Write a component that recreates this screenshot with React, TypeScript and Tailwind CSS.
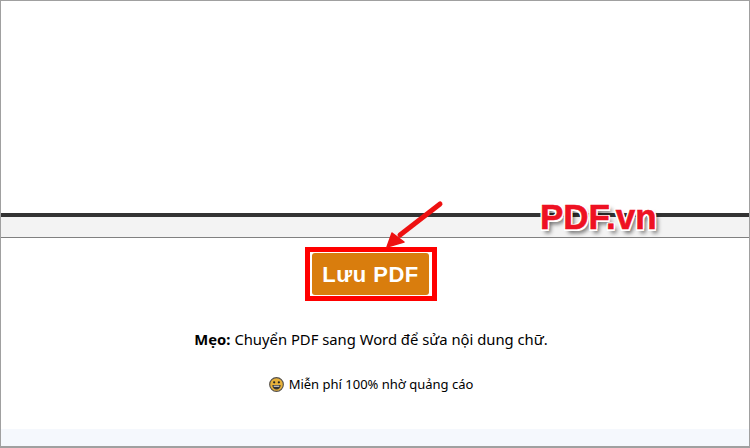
export default function App() {
  return (
    <div className="relative flex h-[448px] w-[750px] flex-col overflow-hidden border border-b-2 border-[#a0a0a0] bg-white font-['Noto_Sans',sans-serif] text-black">
      {/* Viewer area */}
      <div className="h-[212px] shrink-0 bg-white" />
      <div className="h-[4px] shrink-0 bg-[#333333]" />
      <div className="h-[20px] shrink-0 border-b border-[#808080] bg-[#f3f3f3] box-content" />

      <div className="flex flex-col pr-[8px]">
        <div className="mt-[9px] flex justify-center">
          <div className="border-[5px] border-[#ff0000] py-[1px] pl-[2px] pr-[3px]">
            <button className="flex h-[42px] w-[117px] items-center justify-center rounded-[3px] bg-[#d97d0d] font-['Liberation_Sans',sans-serif] text-[22px] font-bold tracking-[0.5px] text-white">
              Lưu PDF
            </button>
          </div>
        </div>

        <p className="mt-[28px] text-center text-[14.8px] leading-[20px]">
          <strong>Mẹo:</strong> Chuyển PDF sang Word để sửa nội dung chữ.
        </p>

        <div className="mt-[26px] flex items-center justify-center gap-[5px] text-[13px] leading-[18px]">
          <svg width="15" height="15" viewBox="0 0 16 16">
            <circle cx="8" cy="8" r="7.3" fill="#e8b23a" stroke="#55504a" strokeWidth="1.2" />
            <circle cx="5.500" cy="5.600" r="1.200" fill="#222222" />
            <circle cx="10.500" cy="5.600" r="1.200" fill="#222222" />
            <path d="M3.600 8.600h8.800c0 3-2 4.800-4.400 4.800s-4.400-1.800-4.400-4.800z" fill="#333333" />
            <path d="M5 9.300h6v1h-6z" fill="#ffffff" />
          </svg>
          <span>Miễn phí 100% nhờ quảng cáo</span>
        </div>
      </div>

      {/* Footer strip */}
      <div className="mt-auto h-[17px] shrink-0 bg-[#f5f8fd]" />

      {/* Annotation arrow */}
      <svg className="absolute left-[379px] top-[197px]" width="66" height="52" viewBox="0 0 66 52">
        <path d="M60 6 L20 37" stroke="#ee1111" strokeWidth="5" strokeLinecap="round" fill="none" />
        <path d="M7 49 L12 35 L24 44 Z" fill="#ee1111" stroke="#ee1111" strokeWidth="1.500" strokeLinejoin="round" />
      </svg>

      {/* Watermark */}
      <span className="absolute left-[539px] top-[196px] font-['Liberation_Sans',sans-serif] text-[35px] font-bold leading-[40px] text-[#ee1122] [-webkit-text-stroke:0.6px_#ee1122] [text-shadow:1.5px_0_0_#fff,-1.5px_0_0_#fff,0_1.5px_0_#fff,0_-1.5px_0_#fff,1.5px_1.5px_0_#fff,-1.5px_1.5px_0_#fff,1.5px_-1.5px_0_#fff,-1.5px_-1.5px_0_#fff,3px_4px_4px_rgba(0,0,0,0.6)]">
        PDF.vn
      </span>
    </div>
  )
}
